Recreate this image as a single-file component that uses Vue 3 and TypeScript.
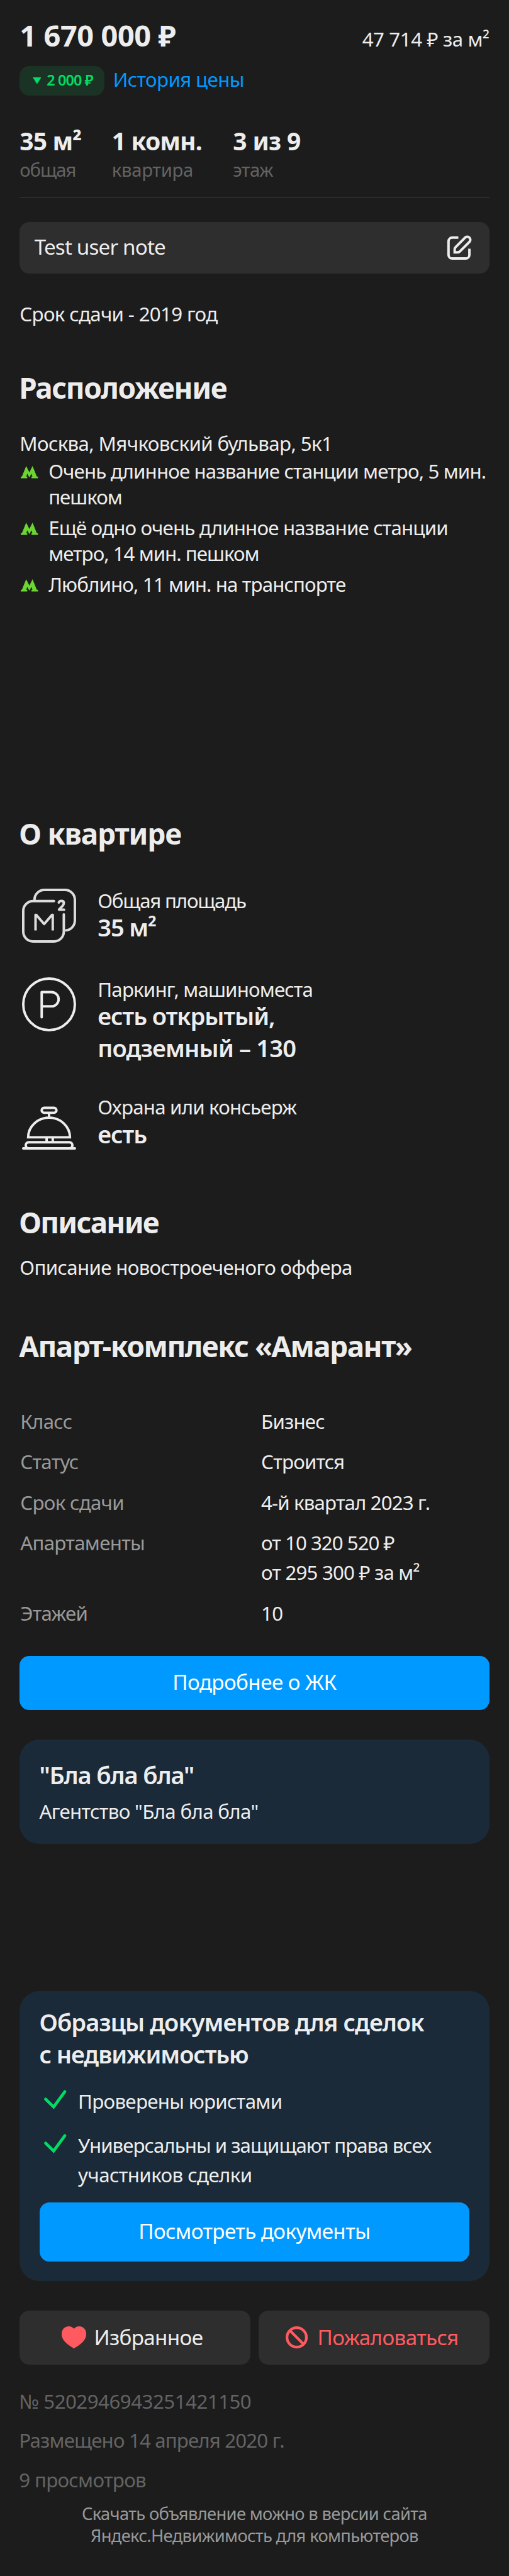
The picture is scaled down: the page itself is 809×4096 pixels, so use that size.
<script setup lang="ts">
interface Line { text: string; fit: string }
interface Station { lines: Line[] }
interface Feature { icon: 'area' | 'parking' | 'bell'; label: Line; values: Line[] }
interface Fact { name: string; values: Line[] }

const stats = [
  { value: 'm35', text: '35 м²', label: 'общая' },
  { value: 'm1', text: '1 комн.', label: 'квартира' },
  { value: 'm3', text: '3 из 9', label: 'этаж' },
]

const stations: Station[] = [
  { lines: [{ text: 'Очень длинное название станции метро, 5 мин.', fit: 'f89' }, { text: 'пешком', fit: 'f100' }] },
  { lines: [{ text: 'Ещё одно очень длинное название станции', fit: 'f85' }, { text: 'метро, 14 мин. пешком', fit: 'f100' }] },
  { lines: [{ text: 'Люблино, 11 мин. на транспорте', fit: 'f89' }] },
]

const features: Feature[] = [
  { icon: 'area', label: { text: 'Общая площадь', fit: 'f124' }, values: [{ text: '35 м²', fit: 'f117' }] },
  {
    icon: 'parking',
    label: { text: 'Паркинг, машиноместа', fit: 'f85' },
    values: [{ text: 'есть открытый,', fit: 'f105' }, { text: 'подземный – 130', fit: 'f85' }],
  },
  { icon: 'bell', label: { text: 'Охрана или консьерж', fit: 'f82' }, values: [{ text: 'есть', fit: 'f105' }] },
]

const facts: Fact[] = [
  { name: 'Класс', values: [{ text: 'Бизнес', fit: 'f85' }] },
  { name: 'Статус', values: [{ text: 'Строится', fit: 'f85' }] },
  { name: 'Срок сдачи', values: [{ text: '4-й квартал 2023 г.', fit: 'f89' }] },
  { name: 'Апартаменты', values: [{ text: 'от 10 320 520 ₽', fit: 'f100' }, { text: 'от 295 300 ₽ за м²', fit: 'f85' }] },
  { name: 'Этажей', values: [{ text: '10', fit: 'f85' }] },
]

const perks: Station[] = [
  { lines: [{ text: 'Проверены юристами', fit: 'f70' }] },
  { lines: [{ text: 'Универсальны и защищают права всех', fit: 'f100' }, { text: 'участников сделки', fit: 'f60' }] },
]
</script>

<template>
  <main class="page">
    <header class="head">
      <strong class="price">1 670 000 ₽</strong>
      <span class="per">47 714 ₽ за м²</span>
    </header>

    <div class="history">
      <span class="badge">
        <svg class="tri" viewBox="0 0 14 11"><path d="M0 0H14L7 11Z" /></svg>
        <span class="delta">2 000 ₽</span>
      </span>
      <a class="link">История цены</a>
    </div>

    <section class="stats">
      <div v-for="s in stats" :key="s.label" class="stat" :class="s.value">
        <div class="stat-value">{{ s.text }}</div>
        <div class="stat-label">{{ s.label }}</div>
      </div>
    </section>

    <div class="note">
      <span>Test user note</span>
      <svg class="edit" viewBox="0 0 48 48">
        <path d="M22 8H12a6 6 0 0 0-6 6V36a6 6 0 0 0 6 6H34a6 6 0 0 0 6-6V26" />
        <path d="M16 32V27Q16 25 17.4 23.6L33.5 7.5A5 5 0 0 1 40.5 14.5L24.4 30.6Q23 32 21 32Z" />
      </svg>
    </div>

    <p class="due">Срок сдачи - 2019 год</p>

    <h2 class="h-location">Расположение</h2>
    <p class="address">Москва, Мячковский бульвар, 5к1</p>
    <ul class="metro">
      <li v-for="(s, i) in stations" :key="i">
        <svg class="m" viewBox="0 0 28 20">
          <path d="M0 20V17.2H1.9L8.8 0L14 10.2L19.2 0L26.1 17.2H28V20H17.4V17.2H19L17.5 12.6L14 18.6L10.5 12.6L9 17.2H10.6V20Z" />
        </svg>
        <div>
          <div v-for="l in s.lines" :key="l.text" :class="l.fit">{{ l.text }}</div>
        </div>
      </li>
    </ul>

    <h2 class="h-flat">О квартире</h2>
    <ul class="features">
      <li v-for="f in features" :key="f.icon" :class="'is-' + f.icon">
        <svg v-if="f.icon === 'area'" class="ficon dim" viewBox="0 0 88 88">
          <path d="M20.3 20V18a16 16 0 0 1 16-16H70a16 16 0 0 1 16 16V52a16 16 0 0 1-16 16" />
          <path d="M52 20.3H18a16 16 0 0 0-16 16V70a16 16 0 0 0 16 16H52a16 16 0 0 0 16-16V42" stroke-linecap="round" />
          <path d="M22 68V42.6H23L36 57.6L49 42.6H50V68" stroke-linejoin="round" />
          <path d="M59.8 22.6Q60.8 20 64 20Q68 20 68 23.6Q68 25.6 66 28L60.2 34.2H68.4" stroke-linecap="round" stroke-linejoin="round" />
        </svg>
        <svg v-else-if="f.icon === 'parking'" class="ficon" viewBox="0 0 88 88">
          <circle cx="44" cy="44" r="42" />
          <path d="M32 65V24H48a11.6 11.6 0 0 1 0 23.2H32" stroke-linecap="round" stroke-linejoin="round" />
        </svg>
        <svg v-else class="ficon" viewBox="0 0 88 88">
          <rect x="32" y="20" width="24" height="8" rx="4" />
          <path d="M44 29V36M40 69V76M50 69V76" />
          <path d="M10 68A34 32 0 0 1 78 68Z" />
          <rect x="6" y="76" width="76" height="10" rx="5" />
          <path d="M2 86H86" stroke-linecap="round" />
        </svg>
        <div>
          <div class="flabel" :class="f.label.fit">{{ f.label.text }}</div>
          <div v-for="v in f.values" :key="v.text" class="fvalue" :class="v.fit">{{ v.text }}</div>
        </div>
      </li>
    </ul>

    <h2 class="h-desc">Описание</h2>
    <p class="desc">Описание новостроеченого оффера</p>

    <h2 class="h-complex">Апарт-комплекс «Амарант»</h2>
    <dl class="facts">
      <template v-for="f in facts" :key="f.name">
        <dt>{{ f.name }}</dt>
        <dd><div v-for="v in f.values" :key="v.text" :class="v.fit">{{ v.text }}</div></dd>
      </template>
    </dl>

    <button class="primary more">Подробнее о ЖК</button>

    <section class="card agency">
      <h3>"Бла бла бла"</h3>
      <p>Агентство "Бла бла бла"</p>
    </section>

    <section class="card docs">
      <h3><span class="f96">Образцы документов для сделок</span><br />с недвижимостью</h3>
      <ul>
        <li v-for="(p, i) in perks" :key="i">
          <svg class="check" viewBox="0 0 48 48"><path d="M9.7 21.2L22.8 34L41 9" /></svg>
          <div>
            <div v-for="l in p.lines" :key="l.text" :class="l.fit">{{ l.text }}</div>
          </div>
        </li>
      </ul>
      <button class="primary view">Посмотреть документы</button>
    </section>

    <div class="actions">
      <button class="plain">
        <svg class="heart" viewBox="0 0 40 36"><path d="M20 36C14 32 0 25 0 12.5C0 5 5 0 11.5 0C15 0 18 1.5 20 4C22 1.5 25 0 28.5 0C35 0 40 5 40 12.5C40 25 26 32 20 36Z" /></svg>
        <span>Избранное</span>
      </button>
      <button class="plain danger">
        <svg class="ban" viewBox="0 0 36 36"><circle cx="18" cy="18" r="15.8" /><path d="M7 7L29 29" /></svg>
        <span>Пожаловаться</span>
      </button>
    </div>

    <div class="meta">
      <div class="f52">№ 5202946943251421150</div>
      <div class="f87">Размещено 14 апреля 2020 г.</div>
      <div class="f70">9 просмотров</div>
    </div>
    <footer class="foot">
      <div>Скачать объявление можно в версии сайта</div>
      <div>Яндекс.Недвижимость для компьютеров</div>
    </footer>
  </main>
</template>

<style>
html, body { background: #1c1c1c; }
body { margin: 0; }
</style>

<style scoped>
.page {
  zoom: 0.9768;
  box-sizing: border-box;
  width: 828px;
  height: 4193px;
  padding: 30px 32px 0;
  overflow: hidden;
  background: #1c1c1c;
  color: #ededed;
  font: 400 32px/42px "Noto Sans", "Open Sans", sans-serif;
  white-space: nowrap;
}
p, h2, h3, ul, dl, dd { margin: 0; padding: 0; }
ul { list-style: none; }
h2 { font-size: 47px; line-height: 57px; height: 56px; font-weight: 700; text-indent: -1px; }
h3 { font-size: 39px; line-height: 52px; font-weight: 600; }
button { display: flex; align-items: center; justify-content: center; box-sizing: border-box; border: 0; border-radius: 16px; font: inherit; font-size: 34px; color: #fff; padding: 0 0 2px; }
svg { display: block; flex: none; fill: none; }

.f52 { letter-spacing: -0.52px; }
.f60 { letter-spacing: -0.59px; }
.f70 { letter-spacing: -0.7px; }
.f82 { letter-spacing: -0.82px; }
.f85 { letter-spacing: -0.85px; }
.f87 { letter-spacing: -0.87px; }
.f89 { letter-spacing: -0.89px; }
.f96 { letter-spacing: -0.96px; }
.f100 { letter-spacing: -1.01px; }
.f105 { letter-spacing: -1.05px; }
.f117 { letter-spacing: -1.17px; }
.f124 { letter-spacing: -1.24px; }

.head { display: flex; justify-content: space-between; align-items: baseline; height: 56px; }
.price { font-size: 48px; line-height: 56px; font-weight: 700; letter-spacing: -0.4px; }
.per { letter-spacing: -0.42px; }

.history { display: flex; gap: 14px; height: 48px; margin-top: 22px; }
.badge { display: flex; align-items: center; gap: 9px; box-sizing: border-box; width: 138px; padding: 0 0 2px 21px; border-radius: 16px; background: #1a3325; color: #00dc64; }
.tri { width: 14px; height: 11px; margin-bottom: -1px; fill: #00dc64; }
.delta { font-size: 24px; font-weight: 600; letter-spacing: -0.9px; }
.link { line-height: 45px; color: #0099ff; letter-spacing: -0.64px; }

.stats { display: grid; grid-template-columns: 150px 197px auto; height: 114px; margin-top: 50px; border-bottom: 1px solid #3f3f3f; }
.stat-value { font-size: 40px; line-height: 48px; font-weight: 700; letter-spacing: -0.9px; }
.m3 .stat-value { letter-spacing: -0.65px; }
.stat-label { margin-top: 5px; font-size: 30px; line-height: 36px; color: #636363; }
.m35 .stat-label { letter-spacing: -1.08px; }
.m1 .stat-label { letter-spacing: -0.33px; }
.m3 .stat-label { letter-spacing: -0.52px; }

.note { display: flex; align-items: center; justify-content: space-between; box-sizing: border-box; height: 84px; margin-top: 40px; padding: 0 24px; border-radius: 16px; background: #2e2e2e; font-size: 34px; letter-spacing: -0.87px; }
.note span { padding-bottom: 2px; }
.edit { width: 48px; height: 48px; stroke: #ededed; stroke-width: 4; }

.due { margin-top: 45.6px; letter-spacing: -0.69px; }
.h-location { margin-top: 70.8px; letter-spacing: -1.45px; }
.address { margin-top: 42px; letter-spacing: -0.65px; }
.metro { display: grid; gap: 8px; margin-top: 3.4px; }
.metro li { display: flex; gap: 17px; padding-left: 2px; }
.m { width: 28px; height: 20px; margin-top: 12.2px; fill: #6cd534; }

.h-flat { margin-top: 355.6px; letter-spacing: -1.2px; }
.features { margin-top: 61.2px; }
.features li { display: flex; gap: 35px; padding-left: 4px; }
.is-parking { margin-top: 54px; }
.is-bell { margin-top: 50.3px; }
.ficon { width: 88px; height: 88px; margin-top: 1.4px; stroke: #ededed; stroke-width: 4; }
.dim { stroke: #dcdcdc; }
.flabel { margin-bottom: -4px; }
.fvalue { font-size: 39px; line-height: 52px; font-weight: 600; }

.h-desc { margin-top: 90px; letter-spacing: -1.8px; }
.desc { margin-top: 25px; letter-spacing: -0.67px; }
.h-complex { margin-top: 78px; letter-spacing: -1.55px; }
.facts { display: grid; grid-template-columns: 392px auto; row-gap: 18px; margin-top: 71.2px; padding-left: 1px; line-height: 48px; }
.facts dt { color: #999; letter-spacing: -0.72px; }

.primary { width: 100%; background: #0099ff; }
.more { height: 88px; margin-top: 45.4px; letter-spacing: -0.58px; }

.card { box-sizing: border-box; padding: 0 32px; border-radius: 32px; background: #1a2a38; }
.agency { height: 170px; margin-top: 48px; padding-top: 32.5px; }
.agency h3 { letter-spacing: -1.2px; }
.agency p { margin-top: 9px; line-height: 48px; letter-spacing: -0.68px; }
.docs { height: 472px; margin-top: 240px; padding-top: 24.5px; }
.docs h3 { letter-spacing: -1.1px; }
.docs ul { display: grid; gap: 24px; margin-top: 27px; line-height: 48px; }
.docs li { display: flex; gap: 15px; }
.check { width: 48px; height: 48px; margin-top: -1px; stroke: #00dc64; stroke-width: 4.8; stroke-linecap: round; stroke-linejoin: miter; }
.view { height: 96px; margin-top: 20.4px; letter-spacing: -0.61px; }

.actions { display: grid; grid-template-columns: 375px 375px; gap: 14px; margin-top: 48px; }
.plain { height: 88px; background: #2e2e2e; color: #ededed; gap: 13px; letter-spacing: -0.64px; justify-content: flex-start; padding-left: 68px; }
.danger { color: #ff5a60; gap: 15.5px; letter-spacing: -0.6px; padding-left: 44px; }
.heart { width: 40px; height: 36px; margin-top: 2px; fill: #ff5a60; }
.ban { width: 36px; height: 36px; margin-top: 2px; stroke: #ff5a60; stroke-width: 4.4; }

.meta { margin-top: 27.6px; line-height: 64px; color: #636363; text-indent: -1px; }
.foot { margin-top: 4.5px; font-size: 28px; line-height: 36px; color: #999; text-align: center; letter-spacing: -0.68px; }
</style>
